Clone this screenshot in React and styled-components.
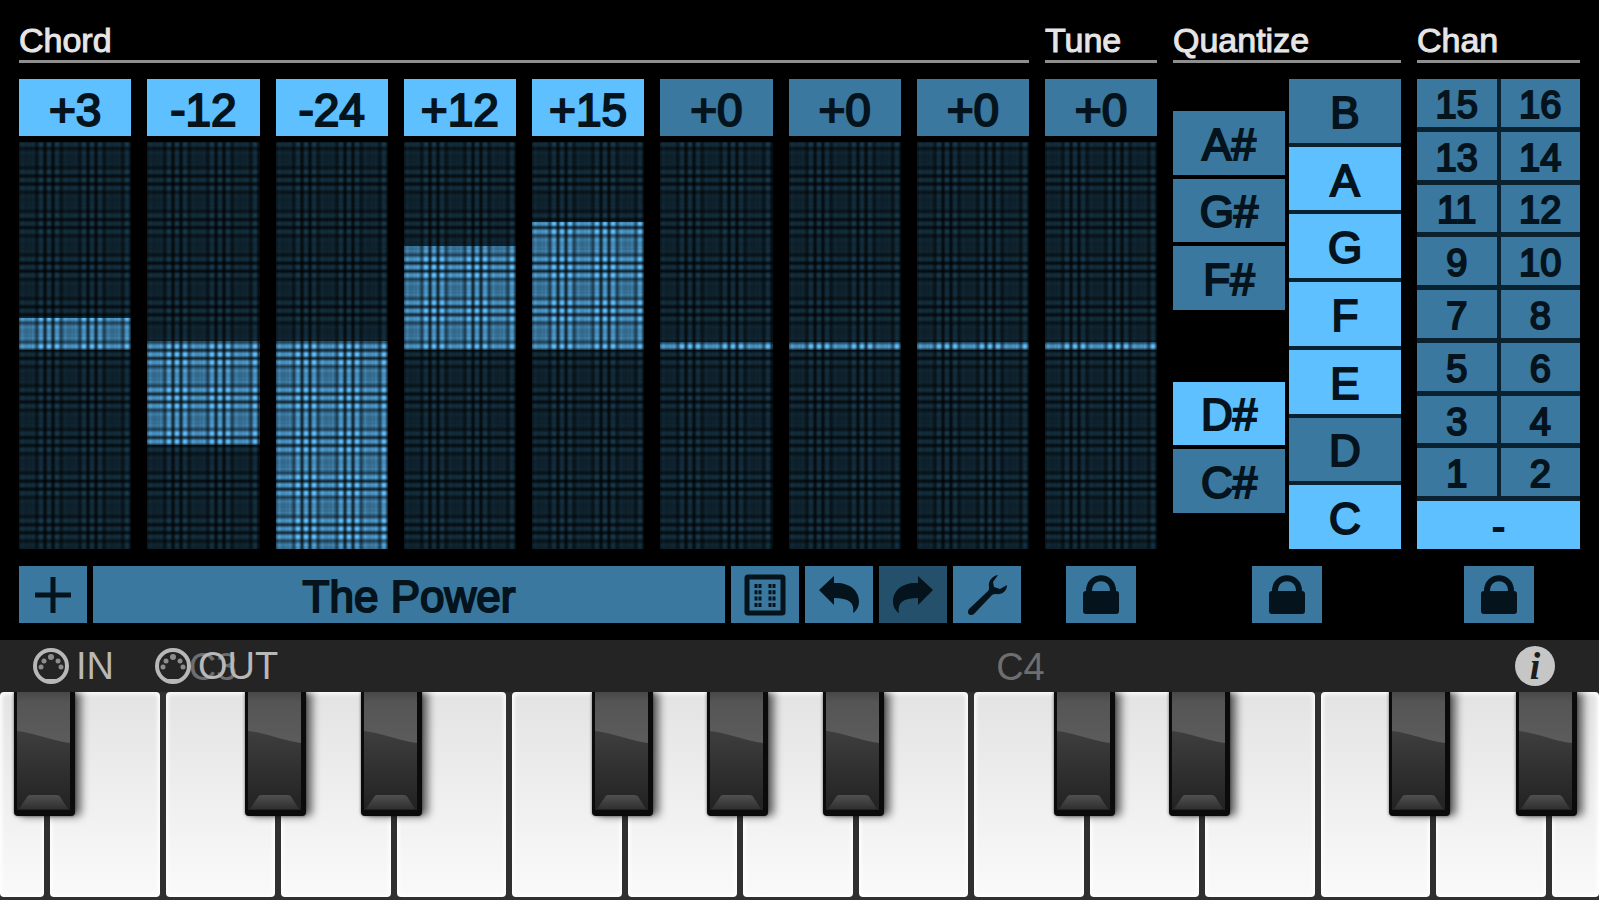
import styled, { createGlobalStyle, css } from "styled-components";

const GlobalStyle = createGlobalStyle`
    *{
        box-sizing: border-box;
    }
    body{
        margin: 0;
        background-color: #000;
        font-family: "Liberation Sans", Arial, sans-serif;
    }
    button{
        margin: 0;
        padding: 0;
        border: none;
        font: inherit;
        cursor: pointer;
    }
`;

const lit = "#5fc0ff";
const idle = "#3a789f";
const dim = "#24506b";
const ink = "#04131c";

const Page = styled.main`
    display: flex;
    flex-direction: column;
    min-height: 100vh;
`;

const Board = styled.div`
    flex: 1;
    display: grid;
    grid-template-columns: 1010fr 112fr 228fr 163fr;
    column-gap: 16px;
    padding: 20px 19px 17px;
`;

const Panel = styled.section`
    display: flex;
    flex-direction: column;
    min-width: 0;
`;

const Title = styled.h2`
    margin: 0 0 16px;
    border-bottom: 3px solid #8e8e8e;
    color: #e6e6e6;
    font-size: 34px;
    font-weight: 400;
    line-height: 40px;
    -webkit-text-stroke: 1px #e6e6e6;
`;

const Columns = styled.div`
    flex: 1;
    display: grid;
    grid-auto-columns: 1fr;
    grid-auto-flow: column;
    gap: 16px;
`;

const Column = styled.div`
    display: flex;
    flex-direction: column;
    gap: 6px;
    min-width: 0;
`;

const Cell = styled.button`
    display: flex;
    align-items: center;
    justify-content: center;
    min-width: 0;
    padding-top: 4px;
    background-color: ${({ $on }) => ($on ? lit : idle)};
    color: ${ink};
    font-size: 38px;
    line-height: 40px;
    -webkit-text-stroke: 2px ${ink};
`;

const ValueCell = styled(Cell)`
    height: 57px;
    font-size: 46px;
`;

// dark weave laid over the slider colours, the same stops in both directions
const weave = css`
    #0004 0, #0003 1px, #0004 3px, #0002 5px, #0009 9px, #0000 12px, #0000 14px,
    #000c 17px, #0000 20px, #0000 22px, #000c 25px, #0000 28px, #0000 30px,
    #0009 33px, #0002 37px, #0004 40px, #0004 43px
`;

const Slider = styled.input`
    appearance: none;
    flex: 1;
    width: 100%;
    min-height: 0;
    margin: 0;
    writing-mode: vertical-lr;
    direction: rtl;
    background-image:
        linear-gradient(to right, ${weave}),
        linear-gradient(to bottom, ${weave}),
        linear-gradient(to bottom,
            transparent ${({ $from }) => $from}%, ${lit} ${({ $from }) => $from}%,
            ${lit} ${({ $to }) => $to}%, transparent ${({ $to }) => $to}%);
    background-size: 43px 100%, 100% calc(100% * 3 / 28), 100% 100%;
    background-position: 9px 0, 0 17px, 0 0;
    background-color: #18394c;
    cursor: pointer;

    &::-webkit-slider-thumb{
        appearance: none;
        width: 100%;
        height: 8px;
        background: transparent;
    }
`;

const Keys = styled.div`
    flex: 1;
    display: grid;
    grid-template-columns: 1fr 1fr;
    column-gap: 4px;
`;

const Sharps = styled.div`
    display: grid;
    grid-template-rows: repeat(6, 1fr);
    gap: 4px;
    padding: 32px 0 36px;
`;

const Naturals = styled.div`
    display: grid;
    grid-auto-rows: 1fr;
    gap: 4px;
    background-color: #0a2130;
`;

const NoteCell = styled(Cell)`
    font-size: 44px;
    ${({ $row }) => $row && css`grid-row: ${$row};`}
`;

const Channels = styled.div`
    flex: 1;
    display: grid;
    grid-template-columns: 1fr 1fr;
    grid-auto-rows: 1fr;
    gap: 5px 4px;
    background-color: #0a2130;
`;

const OmniCell = styled(Cell)`
    grid-column: 1 / -1;
`;

const Footer = styled.div`
    display: flex;
    justify-content: ${({ $center }) => ($center ? "center" : "flex-start")};
    gap: 6px;
    margin-top: 17px;
    padding-right: ${({ $center }) => ($center ? 0 : 8)}px;
`;

const Tool = styled.button`
    display: flex;
    align-items: center;
    justify-content: center;
    flex: none;
    width: ${({ $wide }) => ($wide ? 70 : 68)}px;
    height: 57px;
    background-color: ${({ disabled }) => (disabled ? dim : idle)};
    color: ${ink};
    svg{
        width: 44px;
        height: 44px;
    }
`;

const Preset = styled.button`
    flex: 1;
    height: 57px;
    padding-top: 4px;
    background-color: ${idle};
    color: ${ink};
    font-size: 44px;
    line-height: 44px;
    -webkit-text-stroke: 2px ${ink};
`;

const StatusBar = styled.div`
    position: relative;
    display: flex;
    align-items: center;
    height: 52px;
    padding: 0 44px 0 32px;
    background-color: #242424;
    color: #b8b8b8;
    font-size: 38px;
    line-height: 52px;
`;

const Port = styled.span`
    z-index: 1;
    display: flex;
    align-items: center;
    gap: 6px;
    width: 122px;
    svg{
        flex: none;
        width: 38px;
        height: 38px;
    }
`;

// octave names lie behind the port labels, level with their C key
const Octave = styled.span`
    position: absolute;
    top: 1px;
    left: calc(100% * ${({ $left }) => $left} / 1000);
    color: #6e6e6e;
`;

const Info = styled.button`
    width: 40px;
    height: 40px;
    margin-left: auto;
    border-radius: 50%;
    background-color: #c6c6c6;
    color: #1c1c1c;
    font-family: "Liberation Serif", serif;
    font-size: 38px;
    font-style: italic;
    font-weight: 700;
    line-height: 38px;
`;

const Keyboard = styled.div`
    display: grid;
    grid-template-columns: 88fr repeat(13, 219fr) 94fr;
    gap: 6px;
    height: 208px;
    padding-bottom: 3px;
    background-color: #303030;
    overflow: hidden;
`;

const Slot = styled.div`
    position: relative;
    display: flex;
    min-width: 0;
`;

const WhiteKey = styled.button`
    flex: 1;
    border-radius: 4px;
    background-image: linear-gradient(to bottom, #e3e3e3, #fafafa);
    box-shadow: inset 0 0 4px 2px #fff;
`;

const BlackKey = styled.button`
    position: absolute;
    z-index: 1;
    top: 0;
    left: ${({ $shift }) => ($shift ? -47 : -36)}px;
    width: 61px;
    height: 124px;
    border-radius: 0 0 4px 4px;
    background-color: #0b0b0b;
    box-shadow: 6px 0 8px #0009, 0 0 3px #0008;
    svg{
        display: block;
        width: 61px;
        height: 124px;
    }
`;

const chord = [3, -12, -24, 12, 15, 0, 0, 0];

const sharps = [
    { name: "A#", row: 1 },
    { name: "G#", row: 2 },
    { name: "F#", row: 3 },
    { name: "D#", row: 5, on: true },
    { name: "C#", row: 6 },
];

const naturals = [
    { name: "B" },
    { name: "A", on: true },
    { name: "G", on: true },
    { name: "F", on: true },
    { name: "E", on: true },
    { name: "D" },
    { name: "C", on: true },
];

const channels = [15, 16, 13, 14, 11, 12, 9, 10, 7, 8, 5, 6, 3, 4, 1, 2];

// b: black key over the left edge
const pianoKeys = ["", "b", "", "b", "b", "", "b", "b", "b", "", "b", "b", "", "shift", "b"];

const span = (value) => {
    const size = Math.abs(value) === 24 ? 51 : (Math.abs(value) + 1) * 1.96;
    return value < 0 ? [49, Math.min(100, 49 + size)] : [Math.max(0, 51 - size), 51];
};

const PlusIcon = () => (
    <svg viewBox="0 0 44 44" fill="none" stroke="currentColor" strokeWidth="5">
        <path d="M22 4v36M4 22h36" />
    </svg>
);

const ListIcon = () => (
    <svg viewBox="0 0 44 44" fill="none" stroke="currentColor">
        <rect x="4" y="4" width="36" height="36" rx="1" strokeWidth="5" />
        <path d="M13 11v23M27 11v23" strokeWidth="3" strokeDasharray="4 2.300" />
        <path d="M17 11v23M31 11v23" strokeWidth="3" strokeDasharray="4 2.300" />
    </svg>
);

const UndoIcon = () => (
    <svg viewBox="0 0 44 44" fill="currentColor">
        <path d="M2 17 17 3v7c15-1 25 7 25 19 0 5-3 9-6 11 2-10-4-15-19-15v7z" />
    </svg>
);

const RedoIcon = () => (
    <svg viewBox="0 0 44 44" fill="currentColor">
        <path d="M42 17 27 3v7C12 9 2 17 2 29c0 5 3 9 6 11-2-10 4-15 19-15v7z" />
    </svg>
);

const WrenchIcon = () => (
    <svg viewBox="0 0 44 44" fill="currentColor">
        <path d="M33 2c-6 1-10 6-9 12 0 2 0 3-1 4L4 36c-3 4 1 8 5 5l18-19c1-1 3-1 4-1 6 1 11-3 11-9l-7 4-6-2-1-5z" />
    </svg>
);

const LockIcon = () => (
    <svg viewBox="0 0 44 44">
        <path d="M10 22v-4c0-17 24-17 24 0v4" fill="none" stroke="currentColor" strokeWidth="6" />
        <rect x="4" y="18" width="36" height="23" rx="3" fill="currentColor" />
    </svg>
);

const DinIcon = () => (
    <svg viewBox="0 0 38 38" fill="currentColor">
        <circle cx="19" cy="19" r="16" fill="none" stroke="currentColor" strokeWidth="4" />
        <g opacity=".7">
            <circle cx="9" cy="20" r="2.500" />
            <circle cx="12" cy="14" r="2.500" />
            <circle cx="19" cy="10" r="3" />
            <circle cx="26" cy="14" r="2.500" />
            <circle cx="29" cy="20" r="2.500" />
        </g>
        <path d="M14 32h10v3H14z" />
    </svg>
);

const BlackKeyFace = () => (
    <svg viewBox="0 0 61 124">
        <defs>
            <linearGradient id="gloss" x2="0" y2="1">
                <stop offset="0" stopColor="#484848" />
                <stop offset=".2" stopColor="#555" />
                <stop offset="1" stopColor="#5c5c5c" />
            </linearGradient>
            <linearGradient id="body" x2="0" y2="1">
                <stop offset="0" stopColor="#414141" />
                <stop offset="1" stopColor="#222" />
            </linearGradient>
            <linearGradient id="lip" x2="0" y2="1">
                <stop offset="0" stopColor="#505050" />
                <stop offset="1" stopColor="#303030" />
            </linearGradient>
        </defs>
        <path d="M3 30h53v88H3z" fill="url(#body)" />
        <path d="M3 0h53v51C38 49 22 41 3 39z" fill="url(#gloss)" />
        <path d="M13 105c1-2 3-2 4-2h25c3 0 4 1 5 3l7 11H5z" fill="url(#lip)" />
    </svg>
);

const Pitch = ({ label, value }) => {
    const [from, to] = span(value);
    return <Column>
        <ValueCell $on={value !== 0}>{value < 0 ? value : `+${value}`}</ValueCell>
        <Slider
            type="range"
            aria-label={label}
            min="-24"
            max="24"
            defaultValue={value}
            $from={from}
            $to={to}
        />
    </Column>
}

const Lock = ({ label }) => (
    <Footer $center>
        <Tool $wide aria-label={label}><LockIcon /></Tool>
    </Footer>
);

const App = () => {
    return <Page>
        <GlobalStyle />
        <Board>
            <Panel>
                <Title>Chord</Title>
                <Columns>
                    {chord.map((value, i) => <Pitch key={i} label={`Chord note ${i + 1}`} value={value} />)}
                </Columns>
                <Footer>
                    <Tool aria-label="Add preset"><PlusIcon /></Tool>
                    <Preset>The Power</Preset>
                    <Tool aria-label="Presets"><ListIcon /></Tool>
                    <Tool aria-label="Undo"><UndoIcon /></Tool>
                    <Tool aria-label="Redo" disabled><RedoIcon /></Tool>
                    <Tool aria-label="Settings"><WrenchIcon /></Tool>
                </Footer>
            </Panel>
            <Panel>
                <Title>Tune</Title>
                <Columns>
                    <Pitch label="Tune" value={0} />
                </Columns>
                <Lock label="Lock tune" />
            </Panel>
            <Panel>
                <Title>Quantize</Title>
                <Keys>
                    <Sharps>
                        {sharps.map(({ name, row, on }) => <NoteCell key={name} $row={row} $on={on}>{name}</NoteCell>)}
                    </Sharps>
                    <Naturals>
                        {naturals.map(({ name, on }) => <NoteCell key={name} $on={on}>{name}</NoteCell>)}
                    </Naturals>
                </Keys>
                <Lock label="Lock quantize" />
            </Panel>
            <Panel>
                <Title>Chan</Title>
                <Channels>
                    {channels.map((n) => <Cell key={n}>{n}</Cell>)}
                    <OmniCell $on>-</OmniCell>
                </Channels>
                <Lock label="Lock channel" />
            </Panel>
        </Board>
        <StatusBar>
            <Octave $left={118}>C3</Octave>
            <Octave $left={623}>C4</Octave>
            <Port><DinIcon />IN</Port>
            <Port><DinIcon />OUT</Port>
            <Info aria-label="Info">i</Info>
        </StatusBar>
        <Keyboard>
            {pianoKeys.map((black, i) => (
                <Slot key={i}>
                    <WhiteKey aria-label={`White key ${i + 1}`} />
                    {black && (
                        <BlackKey $shift={black === "shift"} aria-label={`Black key ${i}`}>
                            <BlackKeyFace />
                        </BlackKey>
                    )}
                </Slot>
            ))}
        </Keyboard>
    </Page>
}

export default App;
